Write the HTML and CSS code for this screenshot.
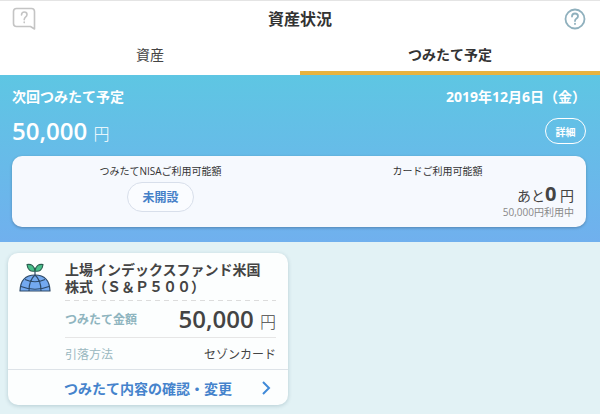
FILE: index.html
```html
<!DOCTYPE html>
<html lang="ja">
<head>
    <meta charset="UTF-8">
    <meta name="viewport" content="width=device-width, initial-scale=1.0">
    <title>資産状況</title>
    <link rel="stylesheet" href="styles.css">
</head>
<body>
    <header class="header">
        <div class="title-bar">
            <button class="icon-button" type="button" aria-label="お問い合わせ">
                <svg class="icon-chat" width="24" height="24" viewBox="0 0 24 24">
                    <path d="M22.5 22 L18.5 19.5 H4.5 Q1.5 19.5 1.5 16.5 V4.5 Q1.5 1.5 4.5 1.5 H19.5 Q22.5 1.5 22.5 4.5 Z"/>
                    <path d="M9.5 8 Q9.7 5 12.2 5 Q15 5 15 7.5 Q15 9 13.5 10.2 Q12.2 11.2 12.2 12.8 M12.2 15 V15.6"/>
                </svg>
            </button>
            <h1 class="title">資産状況</h1>
            <button class="icon-button" type="button" aria-label="ヘルプ">
                <svg class="icon-help" width="22" height="22" viewBox="0 0 22 22">
                    <circle cx="11" cy="11" r="9.5"/>
                    <path d="M8 8.5 Q8 5.5 11 5.5 Q14 5.5 14 8.2 Q14 9.6 12.5 10.6 Q11 11.6 11 13 M11 15.6 V16"/>
                </svg>
            </button>
        </div>
        <nav class="tabs">
            <a class="tab" href="#asset">資産</a>
            <a class="tab active" href="#plan">つみたて予定</a>
        </nav>
    </header>

    <section class="summary">
        <div class="summary-row">
            <h2 class="summary-label">次回つみたて予定</h2>
            <p class="summary-date">2019年12月6日（金）</p>
        </div>
        <div class="summary-row total">
            <p class="amount">50,000 <span class="yen">円</span></p>
            <button class="detail-button" type="button">詳細</button>
        </div>
        <div class="limits">
            <div class="limit">
                <h3 class="limit-label">つみたてNISAご利用可能額</h3>
                <button class="nisa-button" type="button">未開設</button>
            </div>
            <div class="limit">
                <h3 class="limit-label">カードご利用可能額</h3>
                <p class="remain">あと<strong class="remain-number">0</strong> 円</p>
                <p class="used">50,000円利用中</p>
            </div>
        </div>
    </section>

    <main class="content">
        <article class="card">
            <div class="card-body">
                <svg class="card-icon" width="32" height="30" viewBox="0 0 32 30">
                    <path class="globe" d="M1 28 Q1.5 12 16 12 Q30.5 12 31 28 Z"/>
                    <path class="line" d="M10 28 Q10 17 16 12 Q22 17 22 28 M6 16.5 Q16 21 26 16.5 M2 23.5 Q16 29 30 23.5 M16 12 V7"/>
                    <path class="leaf" d="M16 8 Q9 9.5 8 1.5 Q15 0.5 16 8 Z"/>
                    <path class="leaf" d="M16 8 Q23 9.5 24 1.5 Q17 0.5 16 8 Z"/>
                </svg>
                <div class="card-info">
                    <h2 class="fund-name">上場インデックスファンド米国株式（Ｓ＆Ｐ５００）</h2>
                    <div class="card-row">
                        <span class="row-label strong">つみたて金額</span>
                        <p class="amount">50,000 <span class="yen">円</span></p>
                    </div>
                    <div class="card-row method">
                        <span class="row-label">引落方法</span>
                        <span class="row-value">セゾンカード</span>
                    </div>
                </div>
            </div>
            <a class="card-link" href="#change">
                つみたて内容の確認・変更
                <svg class="icon-arrow" width="10" height="14" viewBox="0 0 10 14">
                    <path d="M2 1 L8 7 L2 13"/>
                </svg>
            </a>
        </article>
    </main>
</body>
</html>
```

FILE: styles.css
```css
* {
    box-sizing: border-box;
}

body {
    margin: 0;
    min-height: 100vh;
    font-family: "Open Sans", "Noto Sans CJK JP", sans-serif;
    color: #444;
    background-color: #e2f2f5;
}

h1, h2, h3, p {
    margin: 0;
}

button {
    font-family: inherit;
    cursor: pointer;
}

a {
    text-decoration: none;
}

/* ヘッダー */
.header {
    background-color: #fff;
    border-top: 1px solid #e4e4e4;
}

.title-bar {
    display: flex;
    justify-content: space-between;
    align-items: center;
    height: 36px;
    padding: 0 14px 0 12px;
}

.icon-button {
    display: flex;
    padding: 0;
    border: none;
    background: none;
}

.icon-button svg {
    fill: none;
    stroke-linecap: round;
    stroke-linejoin: round;
}

.icon-chat {
    stroke: #c4c4c4;
    stroke-width: 1.6;
}

.icon-help {
    stroke: #8fb0bd;
    stroke-width: 1.8;
}

.title {
    font-size: 16px;
    line-height: 24px;
    color: #333;
}

.tabs {
    display: flex;
}

.tab {
    flex: 1;
    height: 38px;
    border-bottom: 4px solid #fff;
    font-size: 14px;
    line-height: 36px;
    text-align: center;
    color: #444;
}

.tab.active {
    border-bottom-color: #e8b33f;
    font-weight: bold;
    color: #333;
}

/* 次回つみたて予定 */
.summary {
    padding: 12px 14px 15px 12px;
    color: #fff;
    background: linear-gradient(#5ec6e3, #70b0ee);
}

.summary-row {
    display: flex;
    justify-content: space-between;
    align-items: center;
}

.summary-row.total {
    margin: 6px 0 7px;
}

.summary-label,
.summary-date {
    font-size: 14px;
    font-weight: bold;
    line-height: 20px;
}

.amount {
    font-size: 24px;
    font-weight: 600;
    line-height: 36px;
}

.yen {
    font-size: 16px;
    font-weight: 300;
    line-height: 16px;
}

.detail-button {
    width: 41px;
    height: 26px;
    padding: 0;
    border: 1px solid #fff;
    border-radius: 13px;
    font-size: 10px;
    font-weight: bold;
    color: #fff;
    background: none;
}

.limits {
    display: grid;
    grid-template-columns: 1fr 1fr;
    min-height: 71px;
    padding: 7px 10px;
    border-radius: 10px;
    color: #444;
    background-color: #f6f9fe;
    box-shadow: 0 1px 3px rgba(0, 0, 0, 0.25);
}

.limit {
    text-align: center;
}

.limit-label {
    font-size: 10px;
    font-weight: normal;
    line-height: 16px;
    color: #333;
}

.nisa-button {
    width: 67px;
    height: 30px;
    margin-top: 3px;
    padding: 0;
    border: 1px solid #d8dfeb;
    border-radius: 15px;
    font-size: 12px;
    font-weight: bold;
    color: #4580c8;
    background-color: #fafcff;
}

.remain,
.used {
    padding-right: 2px;
    text-align: right;
}

.remain {
    margin-top: 4px;
    font-size: 14px;
    line-height: 22px;
}

.remain-number {
    font-size: 20px;
}

.used {
    font-size: 10px;
    line-height: 10px;
    color: #888;
}

/* つみたてカード */
.content {
    display: grid;
    grid-template-columns: 1fr 1fr;
    gap: 24px;
    padding: 11px 8px 8px;
}

.card {
    border-radius: 10px;
    background-color: #fcfefe;
    box-shadow: 0 1px 4px rgba(0, 60, 80, 0.2);
}

.card-body {
    display: flex;
    gap: 14px;
    padding: 8px 12px 0 11px;
}

.card-icon {
    flex: none;
    margin-top: 2px;
    fill: none;
    stroke: #2e4a68;
    stroke-width: 1.2;
    stroke-linejoin: round;
}

.globe {
    fill: #73a9f0;
}

.leaf {
    fill: #48c08a;
    stroke: #2a5f50;
}

.card-info {
    flex: 1;
}

.fund-name {
    padding: 0 12px 6px 0;
    font-size: 14px;
    line-height: 17px;
    /* 破線 */
    background: repeating-linear-gradient(to right, #dcdcdc 0 5px, transparent 5px 9px) bottom / 100% 1px no-repeat;
}

.card-row {
    display: flex;
    justify-content: space-between;
    align-items: center;
}

.row-label {
    font-size: 12px;
    color: #9ab8c0;
}

.row-label.strong {
    font-weight: 600;
    color: #8fb5bf;
}

.method {
    height: 32px;
    border-top: 1px solid #e6e6e6;
}

.row-value {
    font-size: 12px;
}

.card-link {
    display: flex;
    justify-content: space-between;
    align-items: center;
    height: 36px;
    padding: 0 17px 0 56px;
    border-top: 1px solid #dde3e8;
    font-size: 14px;
    font-weight: bold;
    color: #4583cc;
}

.icon-arrow {
    fill: none;
    stroke: #3f8ad8;
    stroke-width: 2;
}
```
